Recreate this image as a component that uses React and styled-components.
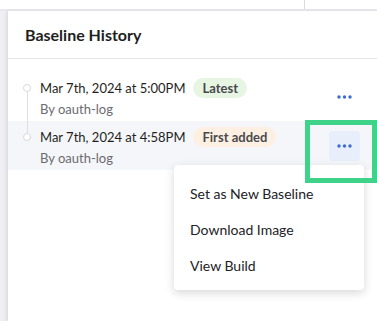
import styled, { createGlobalStyle } from "styled-components";

const GlobalStyle = createGlobalStyle`
  html, body {
    margin: 0;
    padding: 0;
    background: #ffffff;
    font-family: "Lato", "Liberation Sans", sans-serif;
    -webkit-font-smoothing: antialiased;
  }
`;

const history = [
    { date: "Mar 7th, 2024 at 5:00PM", tag: "Latest", tone: "green", by: "By oauth-log" },
    { date: "Mar 7th, 2024 at 4:58PM", tag: "First added", tone: "orange", by: "By oauth-log", open: true },
];

const menuItems = ["Set as New Baseline", "Download Image", "View Build"];

function Dots() {
    return (
        <svg width="15" height="4" viewBox="0 0 15 4">
            <circle cx="2" cy="2" r="1.7" fill="#3b6cd0" />
            <circle cx="7.5" cy="2" r="1.7" fill="#3b6cd0" />
            <circle cx="13" cy="2" r="1.7" fill="#3b6cd0" />
        </svg>
    );
}

function App() {
    return (
        <Page>
            <GlobalStyle />
            <TopBar>
                <TopCell />
            </TopBar>
            <Body>
                <SideStrip />
                <Panel>
                    <PanelHeader>Baseline History</PanelHeader>
                    <List>
                        {history.map((item, i) => (
                            <Row key={item.date} $active={item.open}>
                                <Marker>
                                    <Stub $hidden={i === 0} />
                                    <Circle />
                                    <Tail $hidden={i === history.length - 1} />
                                </Marker>
                                <Info>
                                    <DateLine>
                                        {item.date}
                                        <Badge $tone={item.tone}>{item.tag}</Badge>
                                    </DateLine>
                                    <Author>{item.by}</Author>
                                </Info>
                                <MoreButton $active={item.open}>
                                    <Dots />
                                </MoreButton>
                                {item.open && (
                                    <>
                                        <Highlight />
                                        <Menu>
                                            {menuItems.map((m) => (
                                                <MenuItem key={m}>{m}</MenuItem>
                                            ))}
                                        </Menu>
                                    </>
                                )}
                            </Row>
                        ))}
                    </List>
                </Panel>
            </Body>
        </Page>
    );
}

export default App;

const Page = styled.div`
  width: 377px;
  height: 321px;
  display: flex;
  flex-direction: column;
  overflow: hidden;
`;

const TopBar = styled.div`
  height: 9px;
  border-bottom: 2px solid #e8e8ee;
  display: flex;
`;

const TopCell = styled.div`
  width: 304px;
  border-right: 1px solid #dcdcdf;
`;

const Body = styled.div`
  flex: 1;
  display: flex;
`;

const SideStrip = styled.div`
  width: 8px;
  background: linear-gradient(90deg, #f1f1f5 0%, #e9e9ef 100%);
`;

const Panel = styled.div`
  flex: 1;
  background: #fff;
  box-shadow: -1px 0 3px rgba(0, 0, 0, 0.08);
`;

const PanelHeader = styled.div`
  height: 47px;
  display: flex;
  align-items: center;
  padding: 0 17px;
  border-bottom: 1px solid #e6e6e9;
  font-size: 16px;
  font-weight: 700;
  color: #1e1e1e;
`;

const List = styled.div`
  padding-top: 13px;
`;

const Row = styled.div`
  position: relative;
  display: grid;
  grid-template-columns: 32px 1fr auto;
  align-items: center;
  height: 49px;
  padding-right: 17px;
  background: ${(p) => (p.$active ? "#f5f6f9" : "transparent")};
`;

const Marker = styled.div`
  align-self: stretch;
  display: flex;
  flex-direction: column;
  align-items: center;
  padding-left: 6px;
`;

const Stub = styled.div`
  width: 1px;
  height: 12px;
  background: ${(p) => (p.$hidden ? "transparent" : "#dedee2")};
`;

const Circle = styled.div`
  width: 8px;
  height: 8px;
  border-radius: 50%;
  border: 1px solid #d8d8dc;
  background: #fff;
  box-sizing: border-box;
  flex-shrink: 0;
`;

const Tail = styled.div`
  width: 1px;
  flex: 1;
  background: ${(p) => (p.$hidden ? "transparent" : "#dedee2")};
`;

const Info = styled.div`
  align-self: stretch;
  padding-top: 5px;
  display: flex;
  flex-direction: column;
`;

const DateLine = styled.div`
  height: 22px;
  display: flex;
  align-items: center;
  gap: 8px;
  font-size: 13px;
  color: #1f1f22;
  white-space: nowrap;
`;

const badgeColors = {
  green: "#e7f5e3",
  orange: "#fdf0e2",
};

const Badge = styled.span`
  height: 20px;
  line-height: 20px;
  padding: 0 9px;
  border-radius: 10px;
  font-size: 13px;
  font-weight: 700;
  color: #4a4a4e;
  background: ${(p) => badgeColors[p.$tone]};
`;

const Author = styled.div`
  height: 20px;
  line-height: 20px;
  width: 75px;
  overflow: hidden;
  white-space: nowrap;
  font-size: 13px;
  color: #6b6b70;
`;

const MoreButton = styled.button`
  width: 31px;
  height: 30px;
  border: none;
  border-radius: 4px;
  padding: 0;
  display: flex;
  align-items: center;
  justify-content: center;
  background: ${(p) => (p.$active ? "#e8eefa" : "transparent")};
`;

const Highlight = styled.div`
  position: absolute;
  left: 297px;
  top: -1px;
  width: 72px;
  height: 63px;
  box-sizing: border-box;
  border: 5px solid #3fd389;
  pointer-events: none;
  z-index: 3;
`;

const Menu = styled.div`
  position: absolute;
  left: 166px;
  top: 44px;
  width: 190px;
  padding: 10px 0 7px;
  background: #fff;
  border-radius: 4px;
  box-shadow: 0 3px 10px rgba(0, 0, 0, 0.16);
  z-index: 2;
`;

const MenuItem = styled.div`
  height: 36px;
  display: flex;
  align-items: center;
  padding: 0 16px;
  font-size: 14px;
  color: #222226;
`;
